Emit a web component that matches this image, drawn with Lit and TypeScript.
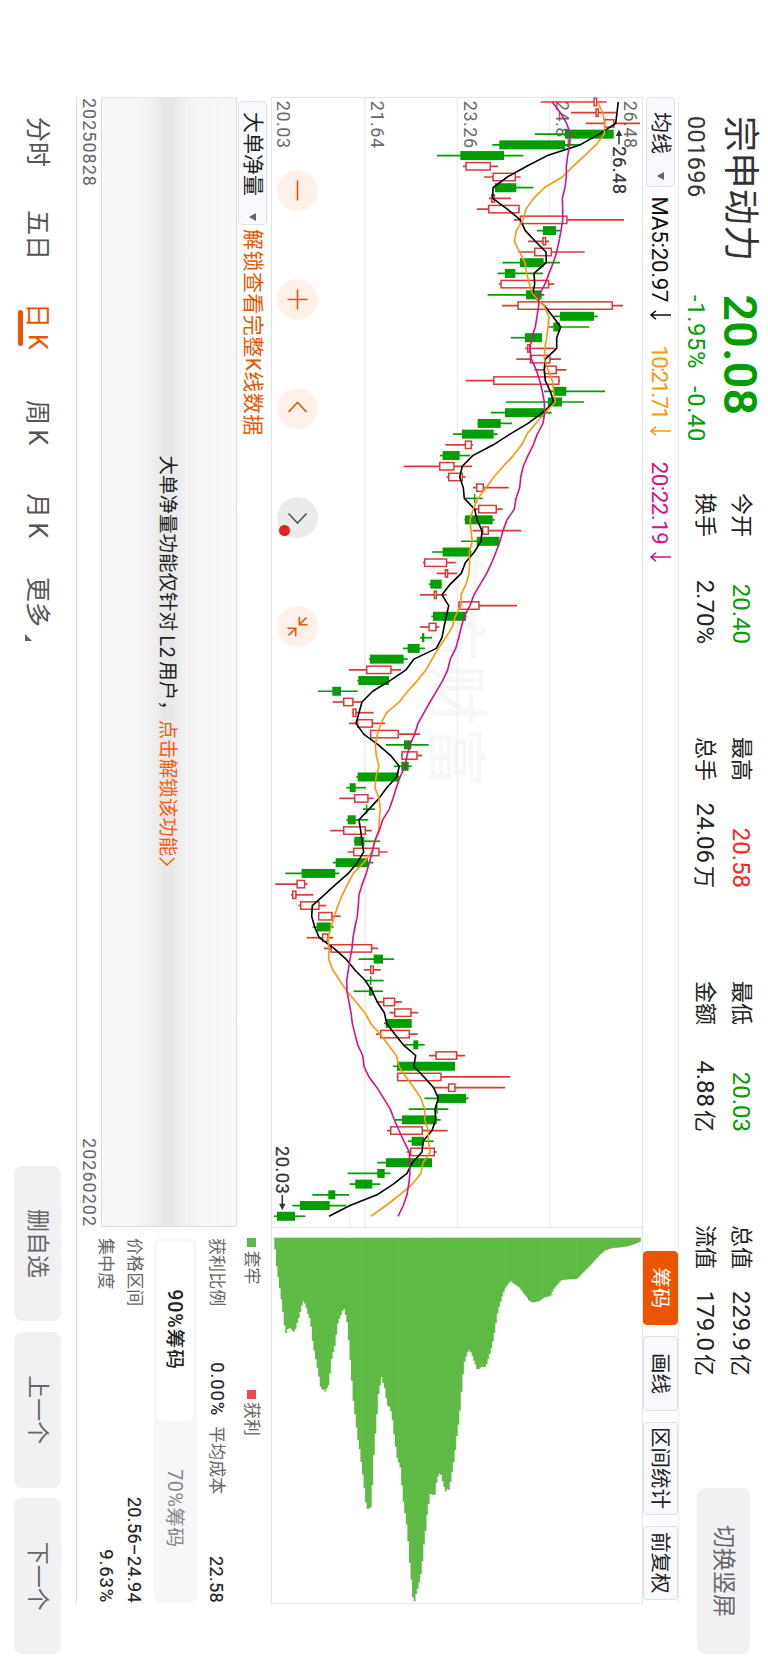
import { LitElement, html, svg, css } from "lit";
import { customElement } from "lit/decorators.js";
import { classMap } from "lit/directives/class-map.js";

type Candle = [up: number, low: number, high: number, bodyLow: number, bodyHigh: number];

// Values are thirds of a pixel above the chart's base line.
const CANDLES: Candle[] = [
  [1,812,1010,971,981],[1,903,1038,977,986],[1,948,1110,1003,1033],[0,795,1031,885,1031],[0,667,933,688,885],
  [0,501,760,571,702],[1,579,684,587,662],[1,642,752,668,737],[0,670,790,675,739],[1,657,723,664,674],
  [1,621,750,655,748],[1,732,1062,750,892],[0,801,870,819,858],[1,774,837,818,828],[1,745,944,793,845],
  [0,697,870,750,821],[0,684,819,705,736],[1,687,853,692,837],[0,653,823,768,815],[1,696,1059,743,1028],
  [0,852,983,870,972],[0,835,958,850,870],[0,723,816,765,816],[1,766,855,772,780],[1,739,873,780,841],
  [1,793,889,822,860],[1,588,870,670,868],[0,822,1005,850,889],[0,708,942,834,876],[0,663,845,705,825],
  [0,623,726,623,692],[0,549,683,576,671],[1,526,609,585,605],[0,510,600,518,569],[1,401,606,508,553],
  [1,530,587,535,578],[1,609,716,619,641],[0,585,638,612,616],[1,613,698,625,680],[0,583,674,585,668],
  [1,608,754,637,656],[0,573,690,620,688],[0,486,605,518,603],[1,459,557,463,531],[1,500,561,525,534],
  [0,477,515,481,515],[1,450,530,492,500],[1,564,741,566,628],[0,484,590,489,588],[1,450,508,476,499],
  [0,450,486,456,463],[0,399,465,413,449],[0,297,413,300,401],[1,237,393,289,364],[0,262,358,265,357],
  [0,144,263,187,213],[1,188,275,220,250],[1,246,311,248,259],[1,237,345,262,308],[1,299,450,301,386],
  [0,348,476,402,424],[1,393,457,395,442],[0,372,425,394,416],[0,258,392,263,386],[0,229,288,239,257],
  [1,208,311,253,295],[0,279,315,289,292],[0,229,295,233,257],[1,181,305,220,287],[0,252,330,253,283],
  [1,233,353,250,328],[0,189,310,197,294],[0,46,208,95,196],[1,16,112,80,105],[1,63,130,67,79],
  [1,85,169,91,148],[1,143,212,145,187],[0,128,191,140,182],[1,110,189,157,174],[1,162,324,182,306],
  [0,266,372,311,339],[1,282,332,301,311],[0,285,341,301,304],[0,251,339,297,308],[1,320,396,340,375],
  [1,358,445,373,424],[0,342,425,347,425],[1,318,443,331,419],[0,403,464,430,445],[1,477,585,497,561],
  [0,369,555,381,555],[1,380,720,382,514],[1,488,705,535,556],[0,463,596,502,588],[0,416,535,497,503],
  [0,375,512,396,500],[1,351,533,361,458],[0,413,491,425,462],[1,410,500,421,494],[0,322,486,348,486],
  [0,233,361,322,344],[0,239,331,256,307],[0,127,237,175,196],[0,67,228,90,179],[0,12,106,21,75],
];

const MA5 = [1045,1041,1037,988,930,832,770,712,669,668,712,751,766,796,828,829,792,794,787,823,848,872,860,860,826,823,826,841,851,818,774,720,670,608,577,569,580,583,614,621,636,633,613,586,574,541,516,536,529,522,516,499,432,408,360,308,276,267,258,281,325,362,388,380,350,327,297,267,272,276,281,262,235,198,163,127,125,134,148,192,228,254,286,307,322,343,350,374,400,437,431,462,491,505,495,497,486,459,456,427,411,370,321,240,177];
const MA10 = [983,998,1004,1003,978,944,909,877,823,791,768,759,739,733,749,765,770,778,789,822,837,834,830,824,823,834,847,851,856,825,797,771,755,730,700,672,648,624,610,600,603,607,598,599,597,588,573,574,556,547,527,505,486,468,442,413,388,350,333,322,316,319,327,318,315,327,331,328,326,314,305,281,250,233,217,204,193,184,174,177,176,188,209,231,258,285,302,330,355,379,387,408,432,453,464,464,475,475,481,459,453,427,389,348,302];
const MA20 = [847,871,890,901,899,893,889,889,885,877,878,878,873,867,860,850,837,825,807,806,801,796,785,780,784,799,809,817,823,824,819,802,790,774,760,752,749,738,733,711,699,690,678,665,650,631,612,600,583,574,566,557,541,533,518,499,480,462,444,434,420,411,405,390,379,369,358,338,328,314,307,298,289,277,267,265,262,255,249,246,240,235,230,231,237,243,247,255,263,278,282,297,321,341,361,373,387,402,418,419,420,416,411,400,384];

// Chip distribution: [price position, depth], thirds of a pixel.
const CHIPS: [number, number][] = [
  [28,58],[31,58],[33,95],[38,130],[43,165],[48,200],[53,238],[57,275],[62,313],[67,298],[76,294],[80,300],[86,307],[91,298],[96,280],[101,264],[106,245],[110,228],[113,212],[118,218],[123,228],[128,250],[132,264],[137,266],[139,302],[144,340],[149,370],[154,397],[159,424],[164,452],[168,480],[177,478],[181,486],[186,474],[191,464],[196,420],[200,382],[206,360],[211,340],[216,290],[221,270],[227,257],[231,247],[236,234],[241,252],[246,272],[250,318],[255,380],[259,430],[263,492],[267,530],[272,570],[277,615],[281,642],[286,668],[291,720],[295,744],[300,793],[304,830],[309,840],[313,835],[318,832],[322,757],[327,662],[331,610],[336,549],[341,484],[346,462],[350,440],[354,458],[359,475],[363,500],[368,528],[373,530],[378,545],[382,566],[387,612],[391,643],[396,682],[401,697],[406,712],[410,758],[415,812],[419,843],[424,875],[429,926],[433,988],[437,1026],[442,1085],[446,1128],[450,1105],[455,1085],[460,1070],[465,1043],[470,1018],[474,966],[479,923],[484,877],[488,831],[493,815],[496,786],[500,793],[505,796],[510,794],[514,759],[519,739],[523,731],[528,735],[532,751],[537,768],[541,788],[546,776],[551,783],[556,758],[560,733],[565,702],[570,665],[575,620],[580,583],[584,549],[588,500],[592,454],[597,402],[602,384],[607,370],[611,359],[616,365],[621,374],[626,390],[632,405],[637,421],[643,416],[650,411],[660,412],[665,402],[670,384],[676,366],[681,345],[686,320],[691,290],[696,257],[701,235],[706,218],[712,198],[718,180],[728,164],[737,153],[748,163],[762,172],[775,189],[786,203],[792,213],[805,218],[822,214],[838,203],[856,199],[864,180],[876,165],[888,152],[905,149],[935,148],[958,125],[985,97],[1005,74],[1022,61],[1045,54],[1066,53],[1090,49],[1108,43],[1127,35],
];

const STEP = 10.714;
const cx = (i: number) => 102 + i * STEP;
const vy = (v: number) => 498 - v / 3;
const line = (vals: number[]) => vals.map((v, i) => `${cx(i).toFixed(1)},${vy(v).toFixed(1)}`).join(" ");

@customElement("k-chart")
export class KChart extends LitElement {
  static styles = css`
    :host { display: block; }
    svg { display: block; }
    .grid { stroke: #e6e9ef; stroke-width: 1; }
    .grid.strong { stroke-width: 1.7; stroke: #e9edf2; }
    .mark { font: 500 61px "Noto Sans CJK SC", sans-serif; fill: #f7f7f8; letter-spacing: 1.6px; }
    .axis { font: 18px Roboto, sans-serif; fill: #6a6a6a; letter-spacing: 0.5px; }
    .note { font: 18.4px Roboto, sans-serif; fill: #333; letter-spacing: 0.4px; stroke: #333; stroke-width: 0.25; }
    .arrow { stroke: #333; stroke-width: 1.5; }
    .head { fill: #333; }
    .wick { stroke-width: 1.7; }
    .up { stroke: #d83a3a; }
    .down { stroke: #009e00; }
    .box { fill: #fff; stroke: #d83a3a; stroke-width: 1.5; }
    .bar { fill: #009e00; }
    .ma { fill: none; stroke-width: 1.6; stroke-linejoin: round; }
    .ma5 { stroke: #000; }
    .ma10 { stroke: #ff960a; }
    .ma20 { stroke: #dc0f87; }
  `;

  private candle([up, lo, hi, bl, bh]: Candle, i: number) {
    const x = cx(i);
    const t = vy(bh), b = vy(bl);
    if (up) {
      return svg`<line class="wick up" x1=${x} x2=${x} y1=${vy(hi)} y2=${vy(lo)}></line>
        <rect class="box" x=${x - 3.7} width="7.4" y=${t + 0.4} height=${Math.max(b - t - 0.8, 1.2)}></rect>`;
    }
    return svg`<line class="wick down" x1=${x} x2=${x} y1=${vy(hi)} y2=${vy(lo)}></line>
      <rect class="bar" x=${x - 4.5} width="9" y=${t} height=${Math.max(b - t, 1.3)}></rect>`;
  }

  render() {
    const labels: [string, number][] = [["26.48", 144], ["24.87", 212.3], ["23.26", 304.5], ["21.64", 397.2], ["20.03", 490.6]];
    return html`<svg width="1130" height="372" viewBox="97 125 1130 372">
      <text class="mark" x="539" y="334">东方财富</text>
      <line class="grid" x1="97" x2="1227" y1="218.7" y2="218.7"></line>
      <line class="grid" x1="97" x2="1227" y1="310.7" y2="310.7"></line>
      <line class="grid strong" x1="97" x2="1227" y1="403" y2="403"></line>
      <line class="grid" x1="1185" x2="1227" y1="418.7" y2="418.7"></line>
      ${labels.map(([t, y]) => svg`<text class="axis" x="100.8" y=${y}>${t}</text>`)}
      ${CANDLES.map((c, i) => this.candle(c, i))}
      <polyline class="ma ma5" points=${line(MA5)}></polyline>
      <polyline class="ma ma10" points=${line(MA10)}></polyline>
      <polyline class="ma ma20" points=${line(MA20)}></polyline>
      <line class="arrow" x1="133" x2="144.5" y1="149" y2="149"></line>
      <path class="head" d="M129.5 149l6.5-3.2v6.4z"></path>
      <text class="note" x="146.3" y="155">26.48</text>
      <text class="note" x="1146" y="492.3">20.03</text>
      <line class="arrow" x1="1195" x2="1206" y1="485.7" y2="485.7"></line>
      <path class="head" d="M1210.3 485.7l-6.5-3.2v6.4z"></path>
    </svg>`;
  }
}

@customElement("chip-chart")
export class ChipChart extends LitElement {
  static styles = css`
    :host { display: block; }
    svg { display: block; }
    .fill { fill: #5bba43; }
    .stripe { stroke: #68bd4c; stroke-width: 0.5; }
  `;

  private depth(x: number) {
    for (let i = 1; i < CHIPS.length; i++) {
      const [x1, y1] = CHIPS[i];
      if (x <= x1) {
        const [x0, y0] = CHIPS[i - 1];
        return y0 + ((y1 - y0) * (x - x0)) / (x1 - x0);
      }
    }
    return 35;
  }

  render() {
    const n = 234;
    const pitch = (1127 - 28) / n;
    let d = "";
    const stripes = [];
    for (let i = 0; i < n; i++) {
      const a = 28 + i * pitch;
      const len = 0.8 + (this.depth(a + pitch / 2) - 24) / 3;
      const y0 = 503 - a / 3 - 125;
      const y1 = y0 - pitch / 3;
      d += i ? "" : `M0.8 ${y0.toFixed(2)}`;
      d += `H${len.toFixed(2)}V${y1.toFixed(2)}`;
      stripes.push(svg`<line class="stripe" x1="0.8" x2=${len} y1=${y1} y2=${y1}></line>`);
    }
    d += "H0.8Z";
    return html`<svg width="366" height="372" viewBox="0 0 366 372">
      <path class="fill" d=${d}></path>${stripes}
    </svg>`;
  }
}

@customElement("app-root")
export class AppRoot extends LitElement {
  static styles = css`
    :host { display: block; width: 768px; height: 1665px; overflow: hidden; background: #fff; }
    * { box-sizing: border-box; }
    .stage {
      width: 1665px; height: 768px; transform-origin: 0 0; transform: translateX(768px) rotate(90deg);
      font-family: Roboto, "Noto Sans CJK SC", sans-serif; color: #222; white-space: nowrap;
      display: grid; grid-template-rows: 89px 36px 372px 195px 76px; padding-left: 97px; line-height: 1;
    }
    .head { display: grid; grid-template-columns: 179px 217px 995px 166px; width: 1568px; border: 0; }
    .id, .quote { display: flex; flex-direction: column; }
    .id { padding: 9px 0 0 19px; }
    .name { font-size: 36px; line-height: 38px; color: #333; letter-spacing: 0.4px; }
    .code { font-size: 23.3px; line-height: 24px; margin-top: 13px; letter-spacing: 0.5px; color: #333; }
    .quote { padding: 5px 0 0 18.5px; color: #009e00; }
    .price { font-size: 46.5px; line-height: 46px; font-weight: 600; letter-spacing: 0.3px; }
    .delta { font-size: 23.8px; line-height: 24px; margin-top: 9px; display: flex; gap: 17px; letter-spacing: 0.6px; padding-left: 0.5px; }
    .stats { display: grid; grid-template-columns: repeat(4, 151px); column-gap: 93px; grid-template-rows: 36px 36px; padding-top: 9px; grid-auto-flow: column; }
    .stat { display: flex; justify-content: space-between; align-items: center; font-size: 22px; color: #222; }
    .num { font-size: 24px; }
    .num .unit { font-size: 22px; margin-left: 3px; }
    .green { color: #009e00; }
    .red { color: #ff2626; }
    .flat { display: flex; align-items: center; justify-content: center; background: #f1f1f4; border-radius: 8px; color: #666; font-size: 23px; }
    .rotate { width: 166px; height: 53px; margin: 18px 0 0 0; }
    .bar { width: 1506px; border-top: 1px solid #ebebed; display: flex; align-items: center; }
    .drop { display: flex; align-items: center; background: #f8f9fc; border: 1px solid #dde0e8; border-radius: 4px; height: 29px; color: #222; font-size: 21px; }
    .drop i { width: 0; height: 0; border: 4px solid transparent; border-top: 7px solid #666; border-bottom: 0; }
    .ma-drop { width: 90px; padding-left: 14px; gap: 18px; margin-top: -1px; }
    .ma { display: flex; align-items: center; font-size: 22.3px; gap: 7.5px; margin-top: 1px; }
    .m5 { margin-left: 9.5px; color: #111; letter-spacing: -0.25px; }
    .ma.m10 { color: #ff960a; letter-spacing: -1.7px; margin-left: 25.5px; }
    .ma.m20 { color: #dc0f87; margin-left: 26px; letter-spacing: -0.5px; }
    .ma svg, .circle svg { fill: none; stroke: currentColor; display: block; }
    .tabs { margin-left: auto; display: flex; gap: 11px; height: 35px; padding-right: 3px; margin-top: -1px; }
    .tab { display: flex; align-items: center; justify-content: center; min-width: 74.4px; padding: 1.5px 4.5px 0; background: #f8f9fc; border: 1px solid #dde0e8; border-radius: 4px; font-size: 20.5px; color: #222; }
    .tab.on { background: #eb5500; border-color: #eb5500; color: #fff; }
    .charts { width: 1507px; display: grid; grid-template-columns: 1130px 366px; column-gap: 10px; border: 1px solid #e1e3ea; margin: -0.5px 0 0 -0.5px; position: relative; height: 372px; }
    .charts k-chart { border-right: 1px solid #e1e3ea; margin: -1px 0 0 -1px; width: 1131px; height: 371px; }
    .charts chip-chart { margin: -1px 0 0 -0.9px; height: 371px; }
    .tools { position: absolute; left: 72.5px; bottom: 5px; display: flex; gap: 68px; color: #eb5500; }
    .circle { width: 41px; height: 41px; border-radius: 50%; background: #fff1ea; position: relative; }
    .circle.gray { background: #ebebeb; color: #555; }
    .dot { position: absolute; width: 10.6px; height: 10.6px; border-radius: 50%; background: #e61e1e; left: 28px; bottom: 1.5px; }
    .lower { display: grid; grid-template-columns: 1130px 366px; column-gap: 10px; width: 1506px; border-bottom: 1px solid #dedee0; }
    .sub { display: flex; align-items: center; height: 34px; padding: 2px 0 0 4px; font-size: 21px; }
    .sub .drop { width: 124px; padding-left: 10px; gap: 17px; }
    .unlock { margin-left: 4px; color: #eb5500; letter-spacing: 0.45px; }
    .panel {
      height: 136px; border: 1px solid #dcdcde; border-left-color: #e6e6e8; font-size: 19.5px; color: #222;
      background: linear-gradient(#f7f7f8 0%, #f6f6f7 28%, #f0f0f1 40%, #e8e8e9 48%, #e8e8e9 53%, #f1f1f2 64%, #f6f6f7 75%, #f7f7f8 100%);
      display: flex; align-items: center; justify-content: center; padding: 3px 2px 0 0;
    }
    .panel .l2 { margin: 0 3px 0 4px; letter-spacing: 0.6px; font-size: 20px; }
    .panel b { font-weight: 400; color: #ff5a0a; }
    .panel svg { fill: none; stroke: #ff5a0a; margin-left: 1px; }
    .dates { display: flex; justify-content: space-between; font-size: 18px; line-height: 24px; color: #666; letter-spacing: 1px; padding-left: 1px; }
    .info { display: flex; flex-direction: column; padding-left: 1px; font-size: 17.1px; color: #666; }
    .legend { display: grid; grid-template-columns: 151.5px 1fr; height: 38px; align-items: center; }
    .legend div { display: flex; align-items: center; gap: 3.5px; font-size: 17px; }
    .sq { width: 9px; height: 9px; background: #5bba43; }
    .sq.r { background: #f04848; }
    .profit { display: grid; grid-template-columns: 178px 10px 1fr; height: 33px; align-items: center; }
    .row { display: flex; justify-content: space-between; align-items: center; }
    .val { color: #222; font-size: 18px; letter-spacing: 0.35px; -webkit-text-stroke: 0.15px #222; }
    .pct { font-size: 18.4px; letter-spacing: 0.9px; }
    .seg { display: grid; grid-template-columns: 1fr 1fr; height: 43px; margin-top: 3px; padding: 3.5px; background: #f7f7fa; border-radius: 7px; font-size: 19.6px; color: #888; letter-spacing: 0.6px; }
    .seg div { display: flex; align-items: center; justify-content: center; padding: 2px 3px 0 0; }
    .seg .on { background: #fff; color: #222; border-radius: 5px; font-weight: 500; letter-spacing: 0.9px; }
    .rows { display: grid; grid-template-rows: 28.5px 28.5px; margin-top: 5.5px; }
    .foot { display: flex; align-items: flex-start; width: 1568px; font-size: 25px; color: #555; }
    .nav { display: flex; padding: 25px 0 0 20px; line-height: 27px; }
    .nav div { display: flex; gap: 4.5px; }
    .w2 { width: 93px; }
    .wk.sel { width: 97px; gap: 6px; }
    .wk { width: 93px; }
    .wk.month { width: 84px; }
    .nav .sel { color: #eb5500; position: relative; }
    .sel::after { content: ""; position: absolute; left: 7px; top: 28px; width: 36px; height: 5.4px; border-radius: 3px; background: #eb5500; }
    .nav .more { gap: 7px; align-items: flex-end; }
    .corner { width: 0; height: 0; border-left: 7px solid transparent; border-bottom: 7px solid #666; margin-bottom: 1px; }
    .acts { margin-left: auto; display: flex; gap: 10.8px; padding: 14.5px 11px 0 0; }
    .act { width: 155.6px; height: 47px; }
  `;

  private stat(label: string, value: string, unit = "", tone = "") {
    return html`<div class="stat"><span>${label}</span><span class="num ${tone}">${value}${unit ? html`<span class="unit">${unit}</span>` : ""}</span></div>`;
  }

  private ma(text: string, cls: string) {
    return html`<div class="ma ${cls}"><span>${text}</span>
      <svg width="10" height="21" viewBox="0 0 10 21" stroke-width="1.5"><path d="M5 0v20M0.8 15l4.2 5 4.2-5"></path></svg></div>`;
  }

  private circle(d: string, gray = false) {
    return html`<div class=${classMap({ circle: true, gray })}>
      <svg width="41" height="41" viewBox="-20.5 -20.5 41 41" stroke-width="1.6"><path d=${d}></path></svg>
      ${gray ? html`<span class="dot"></span>` : ""}</div>`;
  }

  render() {
    return html`<div class="stage">
      <div class="head">
        <div class="id"><span class="name">宗申动力</span><span class="code">001696</span></div>
        <div class="quote"><span class="price">20.08</span><span class="delta"><span>-1.95%</span><span>-0.40</span></span></div>
        <div class="stats">
          ${this.stat("今开", "20.40", "", "green")}${this.stat("换手", "2.70%")}
          ${this.stat("最高", "20.58", "", "red")}${this.stat("总手", "24.06", "万")}
          ${this.stat("最低", "20.03", "", "green")}${this.stat("金额", "4.88", "亿")}
          ${this.stat("总值", "229.9", "亿")}${this.stat("流值", "179.0", "亿")}
        </div>
        <div class="flat rotate">切换竖屏</div>
      </div>
      <div class="bar">
        <div class="drop ma-drop">均线<i></i></div>
        ${this.ma("MA5:20.97", "m5")}${this.ma("10:21.71", "m10")}${this.ma("20:22.19", "m20")}
        <div class="tabs">
          <div class="tab on">筹码</div><div class="tab">画线</div><div class="tab">区间统计</div><div class="tab">前复权</div>
        </div>
      </div>
      <div class="charts">
        <k-chart></k-chart>
        <chip-chart></chip-chart>
        <div class="tools">
          ${this.circle("M-10 0H10")}
          ${this.circle("M-10 0H10M0-10V10")}
          ${this.circle("M3.5-9L-6 0l9.5 9")}
          ${this.circle("M-4-9L5.5 0-4 9", true)}
          ${this.circle("M-9-9l7 7M-1.8-10v8.2h-8M9 9L2 2M1.8 10v-8.2h8")}
        </div>
      </div>
      <div class="lower">
        <div>
          <div class="sub"><div class="drop">大单净量<i></i></div><span class="unlock">解锁查看完整K线数据</span></div>
          <div class="panel">大单净量功能仅针对<span class="l2">L2</span>用户，<b>点击解锁该功能</b>
            <svg width="9" height="18" viewBox="0 0 9 18" stroke-width="1.4"><path d="M1 1.5L8 9l-7 7.5"></path></svg></div>
          <div class="dates"><span>20250828</span><span>20260202</span></div>
        </div>
        <div class="info">
          <div class="legend"><div><span class="sq"></span>套牢</div><div><span class="sq r"></span>获利</div></div>
          <div class="profit">
            <div class="row">获利比例<span class="val pct">0.00%</span></div><span></span>
            <div class="row">平均成本<span class="val">22.58</span></div>
          </div>
          <div class="seg"><div class="on">90%筹码</div><div>70%筹码</div></div>
          <div class="rows">
            <div class="row">价格区间<span class="val">20.56–24.94</span></div>
            <div class="row">集中度<span class="val pct">9.63%</span></div>
          </div>
        </div>
      </div>
      <div class="foot">
        <div class="nav">
          <div class="w2">分时</div><div class="w2">五日</div>
          <div class="wk sel"><span>日</span><span>K</span></div>
          <div class="wk"><span>周</span><span>K</span></div>
          <div class="wk month"><span>月</span><span>K</span></div>
          <div class="more">更多<span class="corner"></span></div>
        </div>
        <div class="acts"><div class="flat act">删自选</div><div class="flat act">上一个</div><div class="flat act">下一个</div></div>
      </div>
    </div>`;
  }
}
